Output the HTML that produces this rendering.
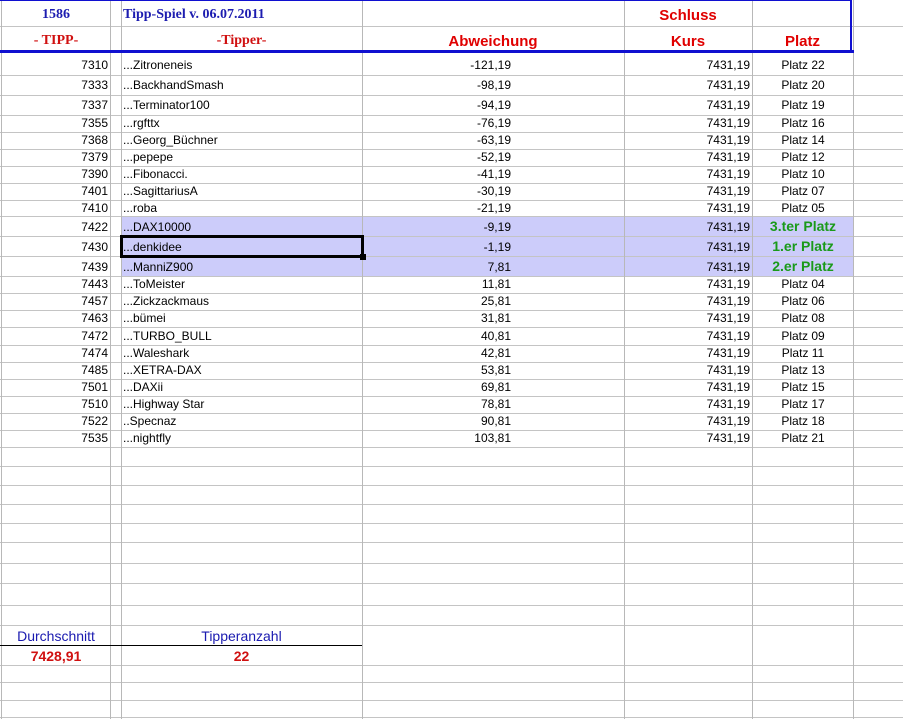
<!DOCTYPE html>
<html><head><meta charset="utf-8"><style>
body{margin:0;width:903px;height:719px;background:#fff;position:relative;overflow:hidden;font-family:"Liberation Sans",Arial,sans-serif;font-size:12px;color:#000}
.h{position:absolute;left:0;width:903px;height:1px;background:#c4c4c4}
.v{position:absolute;top:0;width:1px;height:719px;background:#b8b8b8}
.r{position:absolute;left:0;width:903px}
.r span{position:absolute;top:0;white-space:nowrap}
.a{left:0;width:108px;text-align:right}
.c{left:123px}
.d{left:380px;width:131px;text-align:right}
.e{left:624px;width:126px;text-align:right}
.f{left:753px;width:100px;text-align:center}
.g{color:#1a9a1a;font-weight:bold;font-size:14px}
.hl{position:absolute;left:121px;width:732px;background:#ccccfa}
.t{position:absolute;white-space:nowrap}
.red{color:#e00000;font-weight:bold;font-size:15px}
.ser{font-family:"Liberation Serif",serif;font-weight:bold;color:#1c1cb0;font-size:14px}
</style></head><body>
<div class="hl" style="top:216px;height:60px"></div>
<div class="h" style="top:26px"></div>
<div class="h" style="top:75px"></div><div class="h" style="top:95px"></div><div class="h" style="top:115px"></div><div class="h" style="top:132px"></div><div class="h" style="top:149px"></div><div class="h" style="top:166px"></div><div class="h" style="top:183px"></div><div class="h" style="top:200px"></div><div class="h" style="top:216px"></div><div class="h" style="top:236px"></div><div class="h" style="top:256px"></div><div class="h" style="top:276px"></div><div class="h" style="top:293px"></div><div class="h" style="top:310px"></div><div class="h" style="top:327px"></div><div class="h" style="top:345px"></div><div class="h" style="top:362px"></div><div class="h" style="top:379px"></div><div class="h" style="top:396px"></div><div class="h" style="top:413px"></div><div class="h" style="top:430px"></div><div class="h" style="top:447px"></div><div class="h" style="top:466px"></div><div class="h" style="top:485px"></div><div class="h" style="top:504px"></div><div class="h" style="top:523px"></div><div class="h" style="top:542px"></div><div class="h" style="top:563px"></div><div class="h" style="top:583px"></div><div class="h" style="top:605px"></div><div class="h" style="top:625px"></div><div class="h" style="top:665px"></div><div class="h" style="top:682px"></div><div class="h" style="top:700px"></div><div class="h" style="top:717px"></div>
<div class="v" style="left:1px"></div><div class="v" style="left:110px"></div><div class="v" style="left:121px"></div><div class="v" style="left:362px"></div><div class="v" style="left:624px"></div><div class="v" style="left:752px"></div><div class="v" style="left:853px"></div>
<div style="position:absolute;left:0;top:0;width:850px;height:49px;border:2px solid #1010d0;border-left:none;border-top:1px solid #1010d0"></div>
<div style="position:absolute;left:0;top:50px;width:854px;height:3px;background:#1010d0"></div>
<div class="t ser" style="left:0;width:112px;text-align:center;top:7px">1586</div>
<div class="t ser" style="left:123px;top:7px">Tipp-Spiel v. 06.07.2011</div>
<div class="t ser" style="left:0;width:112px;text-align:center;top:33px;color:#d01010">- TIPP-</div>
<div class="t ser" style="left:121px;width:241px;text-align:center;top:33px;color:#d01010">-Tipper-</div>
<div class="t red" style="left:362px;width:262px;text-align:center;top:33px">Abweichung</div>
<div class="t red" style="left:624px;width:128px;text-align:center;top:7px">Schluss</div>
<div class="t red" style="left:624px;width:128px;text-align:center;top:33px">Kurs</div>
<div class="t red" style="left:752px;width:101px;text-align:center;top:33px">Platz</div>

<div class="r" style="top:56px;height:19px;line-height:19px"><span class="a">7310</span><span class="c">...Zitroneneis</span><span class="d">-121,19</span><span class="e">7431,19</span><span class="f">Platz 22</span></div>
<div class="r" style="top:76px;height:19px;line-height:19px"><span class="a">7333</span><span class="c">...BackhandSmash</span><span class="d">-98,19</span><span class="e">7431,19</span><span class="f">Platz 20</span></div>
<div class="r" style="top:96px;height:19px;line-height:19px"><span class="a">7337</span><span class="c">...Terminator100</span><span class="d">-94,19</span><span class="e">7431,19</span><span class="f">Platz 19</span></div>
<div class="r" style="top:115px;height:17px;line-height:17px"><span class="a">7355</span><span class="c">...rgfttx</span><span class="d">-76,19</span><span class="e">7431,19</span><span class="f">Platz 16</span></div>
<div class="r" style="top:132px;height:17px;line-height:17px"><span class="a">7368</span><span class="c">...Georg_Büchner</span><span class="d">-63,19</span><span class="e">7431,19</span><span class="f">Platz 14</span></div>
<div class="r" style="top:149px;height:17px;line-height:17px"><span class="a">7379</span><span class="c">...pepepe</span><span class="d">-52,19</span><span class="e">7431,19</span><span class="f">Platz 12</span></div>
<div class="r" style="top:166px;height:17px;line-height:17px"><span class="a">7390</span><span class="c">...Fibonacci.</span><span class="d">-41,19</span><span class="e">7431,19</span><span class="f">Platz 10</span></div>
<div class="r" style="top:183px;height:17px;line-height:17px"><span class="a">7401</span><span class="c">...SagittariusA</span><span class="d">-30,19</span><span class="e">7431,19</span><span class="f">Platz 07</span></div>
<div class="r" style="top:200px;height:16px;line-height:16px"><span class="a">7410</span><span class="c">...roba</span><span class="d">-21,19</span><span class="e">7431,19</span><span class="f">Platz 05</span></div>
<div class="r" style="top:217px;height:20px;line-height:20px"><span class="a">7422</span><span class="c">...DAX10000</span><span class="d">-9,19</span><span class="e">7431,19</span><span class="f g" style="line-height:18px">3.ter Platz</span></div>
<div class="r" style="top:237px;height:20px;line-height:20px"><span class="a">7430</span><span class="c">...denkidee</span><span class="d">-1,19</span><span class="e">7431,19</span><span class="f g" style="line-height:18px">1.er Platz</span></div>
<div class="r" style="top:257px;height:20px;line-height:20px"><span class="a">7439</span><span class="c">...ManniZ900</span><span class="d">7,81</span><span class="e">7431,19</span><span class="f g" style="line-height:18px">2.er Platz</span></div>
<div class="r" style="top:276px;height:17px;line-height:17px"><span class="a">7443</span><span class="c">...ToMeister</span><span class="d">11,81</span><span class="e">7431,19</span><span class="f">Platz 04</span></div>
<div class="r" style="top:293px;height:17px;line-height:17px"><span class="a">7457</span><span class="c">...Zickzackmaus</span><span class="d">25,81</span><span class="e">7431,19</span><span class="f">Platz 06</span></div>
<div class="r" style="top:310px;height:17px;line-height:17px"><span class="a">7463</span><span class="c">...bümei</span><span class="d">31,81</span><span class="e">7431,19</span><span class="f">Platz 08</span></div>
<div class="r" style="top:327px;height:18px;line-height:18px"><span class="a">7472</span><span class="c">...TURBO_BULL</span><span class="d">40,81</span><span class="e">7431,19</span><span class="f">Platz 09</span></div>
<div class="r" style="top:345px;height:17px;line-height:17px"><span class="a">7474</span><span class="c">...Waleshark</span><span class="d">42,81</span><span class="e">7431,19</span><span class="f">Platz 11</span></div>
<div class="r" style="top:362px;height:17px;line-height:17px"><span class="a">7485</span><span class="c">...XETRA-DAX</span><span class="d">53,81</span><span class="e">7431,19</span><span class="f">Platz 13</span></div>
<div class="r" style="top:379px;height:17px;line-height:17px"><span class="a">7501</span><span class="c">...DAXii</span><span class="d">69,81</span><span class="e">7431,19</span><span class="f">Platz 15</span></div>
<div class="r" style="top:396px;height:17px;line-height:17px"><span class="a">7510</span><span class="c">...Highway Star</span><span class="d">78,81</span><span class="e">7431,19</span><span class="f">Platz 17</span></div>
<div class="r" style="top:413px;height:17px;line-height:17px"><span class="a">7522</span><span class="c">..Specnaz</span><span class="d">90,81</span><span class="e">7431,19</span><span class="f">Platz 18</span></div>
<div class="r" style="top:430px;height:17px;line-height:17px"><span class="a">7535</span><span class="c">...nightfly</span><span class="d">103,81</span><span class="e">7431,19</span><span class="f">Platz 21</span></div>

<div style="position:absolute;left:120px;top:235px;width:238px;height:17px;border:3px solid #000"></div>
<div style="position:absolute;left:360px;top:254px;width:6px;height:6px;background:#000"></div>

<div class="t" style="left:0;width:112px;text-align:center;top:628px;color:#1a1ab0;font-size:14px">Durchschnitt</div>
<div class="t" style="left:121px;width:241px;text-align:center;top:628px;color:#1a1ab0;font-size:14px">Tipperanzahl</div>
<div style="position:absolute;left:0;top:645px;width:362px;height:1px;background:#000"></div>
<div class="t" style="left:0;width:112px;text-align:center;top:648px;color:#d01010;font-weight:bold;font-size:14px">7428,91</div>
<div class="t" style="left:121px;width:241px;text-align:center;top:648px;color:#d01010;font-weight:bold;font-size:14px">22</div>
</body></html>
